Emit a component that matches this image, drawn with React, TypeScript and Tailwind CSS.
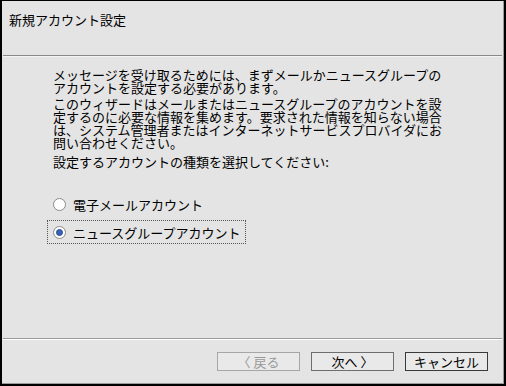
import React, { useState } from 'react';

const font = { fontFamily: '"Noto Sans CJK JP", "DejaVu Sans", sans-serif' };

const Radio: React.FC<{ checked: boolean; label: string; focused?: boolean; onClick: () => void }> = ({ checked, label, focused, onClick }) => (
  <div
    onClick={onClick}
    className={`h-[24px] inline-flex items-center gap-[7px] pl-[5px] pr-[4px] self-start cursor-default border border-dotted ${focused ? 'border-[#555]' : 'border-transparent'}`}
  >
    <div className="w-[13px] h-[13px] rounded-full border border-[#8a8a8a] bg-white flex items-center justify-center">
      {checked && <div className="w-[7px] h-[7px] rounded-full bg-[#3862b4] border border-[#2a4a90]" />}
    </div>
    <span>{label}</span>
  </div>
);

const Button: React.FC<{ label: string; disabled?: boolean; tone: string }> = ({ label, disabled, tone }) => (
  <button
    type="button"
    disabled={disabled}
    className={`w-[83px] h-[19px] flex items-center justify-center border bg-[#e9e9e9] text-[13px] leading-none ${tone} ${disabled ? 'text-[#9a9a9a]' : 'text-black'}`}
  >
    {label}
  </button>
);

export default function App() {
  const [kind, setKind] = useState<'mail' | 'news'>('news');

  return (
    <div style={font} className="w-[506px] h-[386px] bg-black pt-px pl-[2px] pr-[2px] pb-[2px] text-[13px] text-black select-none">
      <div className="w-full h-full bg-[#e4e4e4] border-r border-b border-[#9a9a9a] flex flex-col">
        {/* title */}
        <div className="h-[54px] pl-[7px] pt-[11px] leading-[16px]">新規アカウント設定</div>
        <div className="mx-px h-px bg-[#8a8a8a]" />
        <div className="mx-px h-px bg-[#f4f4f4]" />

        {/* body */}
        <div className="flex-1 pl-[51px] pt-[11px] leading-[13px] whitespace-nowrap">
          <p>
            メッセージを受け取るためには、まずメールかニュースグループの<br />
            アカウントを設定する必要があります。
          </p>
          <p className="mt-[3px]">
            このウィザードはメールまたはニュースグループのアカウントを設<br />
            定するのに必要な情報を集めます。要求された情報を知らない場合<br />
            は、システム管理者またはインターネットサービスプロバイダにお<br />
            問い合わせください。
          </p>
          <p className="mt-[6px]">設定するアカウントの種類を選択してください:</p>

          <div className="mt-[24px] -ml-[6px] flex flex-col gap-[4px]">
            <Radio checked={kind === 'mail'} focused={kind === 'mail'} label="電子メールアカウント" onClick={() => setKind('mail')} />
            <Radio checked={kind === 'news'} focused={kind === 'news'} label="ニュースグループアカウント" onClick={() => setKind('news')} />
          </div>
        </div>

        {/* footer */}
        <div className="mx-px h-px bg-[#9a9a9a]" />
        <div className="mx-px h-px bg-white" />
        <div className="h-[43px] pt-[12px] pr-[15px] flex justify-end gap-[11px]">
          <Button label="〈 戻る" disabled tone="border-[#a6a6a6]" />
          <Button label="次へ 〉" tone="border-[#6e6e6e]" />
          <Button label="キャンセル" tone="border-[#3a3a3a]" />
        </div>
      </div>
    </div>
  );
}
